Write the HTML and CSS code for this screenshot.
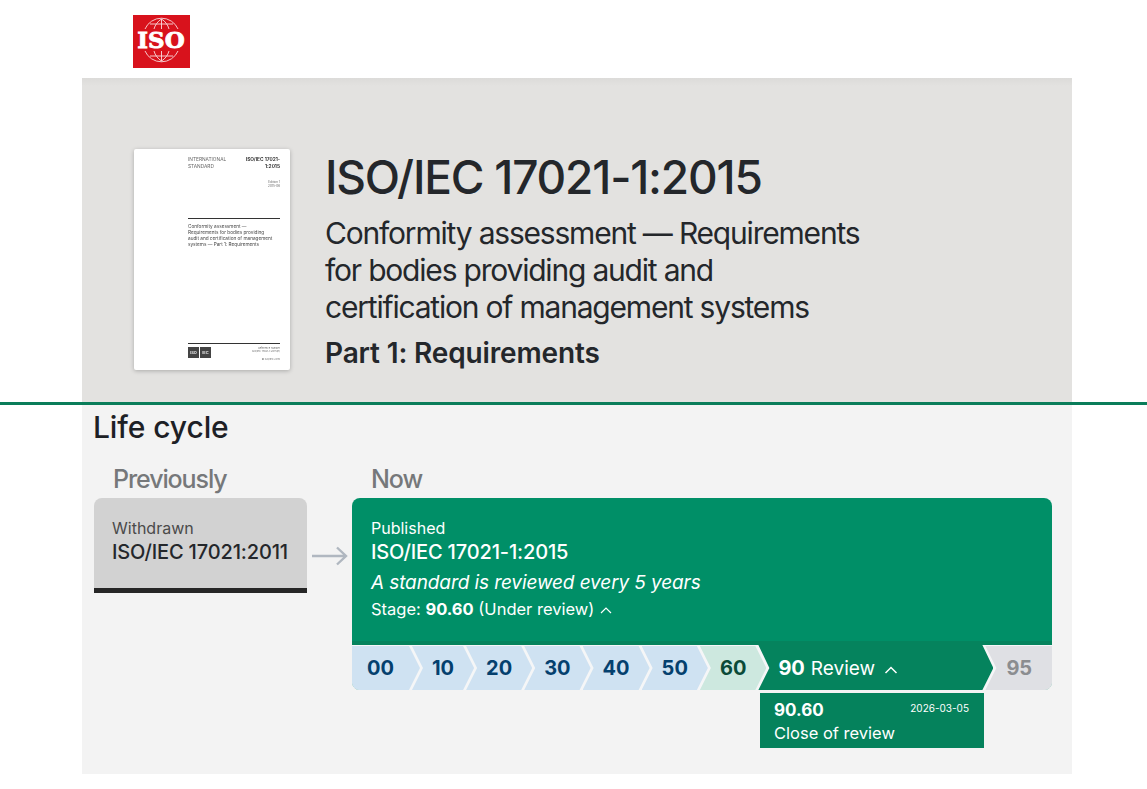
FILE: index.html
```html
<!DOCTYPE html>
<html lang="en">
<head>
    <meta charset="UTF-8">
    <meta name="viewport" content="width=device-width, initial-scale=1.0">
    <title>ISO/IEC 17021-1:2015</title>
    <link rel="stylesheet" href="styles.css">
</head>
<body>
    <header class="topbar">
        <svg class="logo" viewBox="0 0 57 53" aria-label="ISO">
            <rect width="57" height="53" fill="#d8121c"/>
            <g fill="none" stroke="#fff" stroke-width="0.9" opacity="0.85">
                <path d="M12 14a18 18 0 0 1 33 0"/>
                <path d="M12 36a18 18 0 0 0 33 0"/>
                <path d="M21 14c1-4 4-8 7.500-10c3.500 2 6.500 6 7.500 10"/>
                <path d="M21 36c1 4 4 8 7.500 10c3.500-2 6.500-6 7.500-10"/>
                <path d="M28.500 4v10M28.500 36v10"/>
                <path d="M17 9h23M17 41h23"/>
            </g>
            <text class="logo-text" x="28" y="33" text-anchor="middle">ISO</text>
        </svg>
    </header>

    <section class="hero">
        <div class="cover">
            <div class="cover-top">
                <div>INTERNATIONAL<br>STANDARD</div>
                <div class="cover-ref">ISO/IEC 17021-<br>1:2015</div>
            </div>
            <div class="cover-edition">Edition 1<br>2015-06</div>
            <div class="cover-title">Conformity assessment &mdash;<br>Requirements for bodies providing<br>audit and certification of management<br>systems &mdash; Part 1: Requirements</div>
            <div class="cover-foot">
                <div class="cover-marks"><span>ISO</span><span>IEC</span></div>
                <div class="cover-note">Reference number<br>ISO/IEC 17021-1:2015(E)</div>
            </div>
            <div class="cover-year">&copy; ISO/IEC 2015</div>
        </div>
        <div class="hero-text">
            <h1>ISO/IEC 17021-1:2015</h1>
            <p class="hero-sub">Conformity assessment &mdash; Requirements<br>for bodies providing audit and<br>certification of management systems</p>
            <p class="hero-part">Part 1: Requirements</p>
        </div>
    </section>

    <div class="divider"></div>

    <section class="lifecycle">
        <h2>Life cycle</h2>
        <div class="columns">
            <div class="col-prev">
                <h3>Previously</h3>
                <div class="prev-row">
                    <div class="prev-card">
                        <div class="card-status">Withdrawn</div>
                        <div class="card-ref">ISO/IEC 17021:2011</div>
                    </div>
                    <svg class="arrow" viewBox="0 0 36 20" fill="none" stroke="#b0b7c0" stroke-width="2.400">
                        <path d="M0 10h34M25 1.500l9 8.500-9 8.500"/>
                    </svg>
                </div>
            </div>
            <div class="col-now">
                <h3>Now</h3>
                <div class="now-card">
                    <div class="now-info">
                        <div class="card-status">Published</div>
                        <div class="card-ref">ISO/IEC 17021-1:2015</div>
                        <div class="now-note">A standard is reviewed every 5 years</div>
                        <div class="now-stage">Stage: <b>90.60</b> (Under review)
                            <svg class="chev-small" viewBox="0 0 12 7" fill="none" stroke="#fff" stroke-width="1.200"><path d="M1 6l5-5 5 5"/></svg>
                        </div>
                    </div>
                    <div class="steps">
                        <div class="step step-first">00</div>
                        <div class="step">10</div>
                        <div class="step">20</div>
                        <div class="step">30</div>
                        <div class="step">40</div>
                        <div class="step">50</div>
                        <div class="step step-60">60</div>
                        <div class="step step-90"><b>90</b> <span class="step-name">Review</span>
                            <svg class="chev-big" viewBox="0 0 14 8" fill="none" stroke="#fff" stroke-width="1.500"><path d="M1.500 7l5.500-5.500 5.500 5.500"/></svg>
                        </div>
                        <div class="step step-95">95</div>
                    </div>
                </div>
                <div class="detail">
                    <div class="detail-line">
                        <b>90.60</b>
                        <span class="detail-date">2026-03-05</span>
                    </div>
                    <div class="detail-name">Close of review</div>
                </div>
            </div>
        </div>
    </section>
</body>
</html>
```

FILE: styles.css
```css
* {
    box-sizing: border-box;
}

body {
    margin: 0;
    background: #fff;
    font-family: Inter, "Liberation Sans", sans-serif;
    color: #24272b;
}

h1, h2, h3, p {
    margin: 0;
}

.topbar {
    height: 78px;
    padding: 15px 0 0 133px;
}

.logo {
    display: block;
    width: 57px;
    height: 53px;
}

.logo-text {
    font-family: "DejaVu Serif", serif;
    font-weight: 700;
    font-size: 23px;
    fill: #fff;
    stroke: #fff;
    stroke-width: 0.8px;
}

.hero {
    margin: 0 75px 0 82px;
    height: 324px;
    padding: 71px 0 0 52px;
    display: flex;
    gap: 35px;
    background: linear-gradient(#dcdbd9, #e3e2e0 8px);
}

.cover {
    width: 156px;
    height: 221px;
    padding: 7px 10px 0 54px;
    background: #fff;
    border-radius: 2px;
    box-shadow: 0 1px 4px rgba(0, 0, 0, 0.25);
    font-size: 4.800px;
    line-height: 6.500px;
    color: #666;
    filter: blur(0.3px);
}

.cover-top {
    display: flex;
    justify-content: space-between;
    white-space: nowrap;
}

.cover-ref {
    font-weight: 700;
    text-align: right;
    color: #333;
}

.cover-edition {
    margin-top: 11px;
    text-align: right;
    font-size: 3px;
    line-height: 4px;
}

.cover-title {
    margin-top: 30px;
    padding-top: 4px;
    height: 125px;
    border-top: 1px solid #333;
    font-size: 4.700px;
    line-height: 6px;
    white-space: nowrap;
    color: #444;
}

.cover-foot {
    display: flex;
    justify-content: space-between;
    padding-top: 3px;
    border-top: 1px solid #333;
}

.cover-marks {
    display: flex;
    gap: 1px;
}

.cover-marks span {
    width: 11px;
    height: 11px;
    background: #444;
    color: #ddd;
    font-size: 4px;
    font-weight: 700;
    line-height: 11px;
    text-align: center;
}

.cover-note {
    font-size: 2.500px;
    line-height: 3px;
    text-align: right;
}

.cover-year {
    font-size: 2.500px;
    line-height: 4px;
    text-align: right;
}

h1 {
    font-size: 46px;
    font-weight: 500;
    line-height: 56px;
    letter-spacing: -1.2px;
}

.hero-sub {
    margin-top: 10px;
    font-size: 30px;
    line-height: 37px;
    letter-spacing: -1.2px;
}

.hero-part {
    margin-top: 8px;
    font-size: 28px;
    font-weight: 600;
    line-height: 38px;
    letter-spacing: -0.15px;
}

.divider {
    height: 3px;
    background: #0a7d5a;
}

.lifecycle {
    margin: 0 75px 0 82px;
    height: 369px;
    padding: 3px 20px 0 12px;
    background: #f3f3f3;
}

h2 {
    margin-left: -1px;
    font-size: 30px;
    font-weight: 500;
    line-height: 38px;
    letter-spacing: -0.1px;
    color: #1d2025;
}

.columns {
    display: flex;
    margin-top: 14px;
}

h3 {
    font-size: 25px;
    font-weight: 500;
    line-height: 38px;
    letter-spacing: -1.1px;
    color: #76787a;
    padding-left: 19px;
}

.col-prev {
    width: 258px;
}

.prev-row {
    display: flex;
    align-items: center;
    gap: 5px;
}

.prev-card {
    width: 213px;
    height: 95px;
    padding: 21px 18px 0;
    background: #d2d2d2;
    border-radius: 8px 8px 0 0;
    border-bottom: 5px solid #262626;
}

.card-status {
    font-size: 16px;
    line-height: 19px;
}

.prev-card .card-status {
    color: #4a4a4a;
}

.card-ref {
    font-size: 20px;
    font-weight: 500;
    line-height: 29px;
    letter-spacing: -0.15px;
}

.arrow {
    width: 36px;
    height: 20px;
    margin-top: 20px;
}

.col-now {
    width: 700px;
}

.now-card {
    height: 192px;
    background: #008f67;
    border-radius: 8px;
    color: #fff;
    display: flex;
    flex-direction: column;
    overflow: hidden;
}

.now-info {
    height: 147px;
    padding: 21px 19px 0;
    border-bottom: 4px solid #05835d;
}

.now-note {
    font-size: 19px;
    font-style: italic;
    line-height: 31px;
    letter-spacing: -0.1px;
}

.now-stage {
    font-size: 16.500px;
    line-height: 23px;
}

.chev-small {
    width: 12px;
    height: 7px;
    margin-left: 1px;
    vertical-align: 1px;
}

.steps {
    display: flex;
    height: 45px;
    background: #f5f6f7;
}

.step {
    height: 44px;
    margin-top: 1px;
    margin-left: -8px;
    padding: 0 20px;
    display: flex;
    align-items: center;
    font-size: 20px;
    font-weight: 700;
    color: #04406e;
    background: #cfe2f2;
    clip-path: polygon(0 0, calc(100% - 11px) 0, 100% 50%, calc(100% - 11px) 100%, 0 100%, 11px 50%);
}

.step-first {
    margin-left: 0;
    padding: 0 26px 0 15px;
    clip-path: polygon(0 0, calc(100% - 11px) 0, 100% 50%, calc(100% - 11px) 100%, 0 100%);
}

.step-60 {
    background: #cde8df;
    color: #0b4a38;
}

.step-90 {
    flex: none;
    width: 235px;
    height: 45px;
    margin-top: 0;
    padding: 1px 0 0 20px;
    font-weight: 400;
    color: #fff;
    background: #05835d;
    clip-path: polygon(0 0, calc(100% - 11px) 0, 100% 51%, calc(100% - 11px) 100%, 0 100%, 11px 51%);
}

.step-90 b {
    margin-right: 6px;
}

.step-name {
    font-size: 19px;
}

.chev-big {
    width: 14px;
    height: 8px;
    margin-left: 9px;
    margin-top: 3px;
}

.step-95 {
    flex: 1;
    padding: 0 0 0 21px;
    color: #8b8d90;
    background: #dfe0e4;
    clip-path: polygon(0 0, 100% 0, 100% 100%, 0 100%, 11px 50%);
}

.detail {
    width: 224px;
    height: 55px;
    margin: 3px 0 0 408px;
    padding: 5px 0 0 14px;
    background: #05825c;
    color: #fff;
}

.detail-line {
    display: flex;
    justify-content: space-between;
    align-items: flex-start;
    padding-right: 15px;
    font-size: 17px;
    line-height: 24px;
}

.detail-date {
    font-size: 10px;
    line-height: 20px;
}

.detail-name {
    font-size: 16.500px;
    line-height: 23px;
}
```
